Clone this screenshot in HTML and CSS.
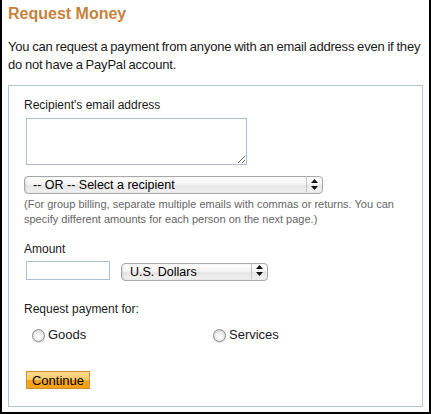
FILE: index.html
```html
<!DOCTYPE html>
<html lang="en">
<head>
  <meta charset="UTF-8" />
  <title>Request Money</title>
  <link rel="stylesheet" href="styles.css">
</head>
<body>

  <h1 class="title">Request Money</h1>
  <p class="intro">You can request a payment from anyone with an email address even if they do not have a PayPal account.</p>

  <!-- Request form box -->
  <form class="box">
    <label class="label" for="email">Recipient's email address</label>
    <textarea id="email" class="emails"></textarea>

    <div class="select recipient">
      <select>
        <option>-- OR -- Select a recipient</option>
      </select>
      <span class="arrows">
        <svg width="7" height="11" viewBox="0 0 7 11"><path d="M3.5 0 L7 4 L0 4 Z M0 7 L7 7 L3.5 11 Z" fill="#111"/></svg>
      </span>
    </div>

    <p class="help">(For group billing, separate multiple emails with commas or returns. You can specify different amounts for each person on the next page.)</p>

    <label class="label amount-label" for="amount">Amount</label>
    <div class="amount-row">
      <input type="text" id="amount" class="amount" />
      <div class="select currency">
        <select>
          <option>U.S. Dollars</option>
        </select>
        <span class="arrows">
          <svg width="7" height="11" viewBox="0 0 7 11"><path d="M3.5 0 L7 4 L0 4 Z M0 7 L7 7 L3.5 11 Z" fill="#111"/></svg>
        </span>
      </div>
    </div>

    <div class="label pay-label">Request payment for:</div>
    <div class="radios">
      <label class="choice"><input type="radio" name="type" /> Goods</label>
      <label class="choice"><input type="radio" name="type" /> Services</label>
    </div>

    <button type="submit" class="continue">Continue</button>
  </form>

</body>
</html>
```

FILE: styles.css
```css
/* Basic Reset */
* {
  box-sizing: border-box;
}

body {
  font-family: "Liberation Sans", Arial, sans-serif;
  margin: 0;
  height: 414px;
  background: #fff;
  color: #1a1a1a;
  border: 2px solid #000;
  border-top: none;
  padding: 0 6px;
}

.title {
  font-size: 16px;
  line-height: 20px;
  font-weight: bold;
  color: #c8813b;
  margin: 0;
  padding-top: 4px;
}

.intro {
  font-size: 13px;
  line-height: 18px;
  letter-spacing: -0.2px;
  word-spacing: -0.5px;
  margin: 14px 0 11px;
}

/* Form box */
.box {
  border: 1px solid #b3c5dc;
  background: #fff;
  padding: 12px 15px 16px;
  height: 322px;
}

.label {
  display: block;
  font-size: 12px;
  line-height: 15px;
}

.emails {
  display: block;
  width: 221px;
  height: 47px;
  margin: 5px 0 0 2px;
  border: 1px solid #a9bfd9;
  font-family: inherit;
}

/* Aqua style selects */
.select {
  position: relative;
  height: 18px;
}

.select select {
  appearance: none;
  -webkit-appearance: none;
  width: 100%;
  height: 18px;
  margin: 0;
  padding: 0 20px 0 8px;
  font-family: inherit;
  font-size: 12.5px;
  color: #000;
  border: 1px solid #a8a8a8;
  border-radius: 4px;
  background: linear-gradient(to bottom, #ffffff 0%, #f4f4f4 45%, #e6e6e6 55%, #f2f2f2 100%);
  box-shadow: inset 1px 0 2px rgba(0, 0, 0, 0.12);
  outline: none;
}

.select .arrows {
  position: absolute;
  right: 1px;
  top: 1px;
  bottom: 1px;
  width: 16px;
  border-left: 1px solid #c4c4c4;
  display: flex;
  align-items: center;
  justify-content: center;
  pointer-events: none;
}

.recipient {
  width: 299px;
  margin-top: 10px;
}

.help {
  font-size: 11px;
  line-height: 15px;
  color: #666;
  margin: 4px 0 0;
}

.amount-label {
  margin-top: 15px;
}

.amount-row {
  display: flex;
  align-items: center;
  gap: 11px;
  margin: 4px 0 0 2px;
}

.amount {
  width: 84px;
  height: 19px;
  margin: 0;
  border: 1px solid #a9bfd9;
}

.currency {
  width: 147px;
}

.pay-label {
  margin-top: 22px;
}

.radios {
  display: flex;
  margin: 10px 0 0 8px;
  height: 16px;
}

.choice {
  width: 181px;
  display: flex;
  align-items: center;
  gap: 3px;
  font-size: 13px;
  line-height: 16px;
}

.choice input {
  appearance: none;
  -webkit-appearance: none;
  width: 13px;
  height: 13px;
  margin: 0;
  border: 1px solid #8a8a8a;
  border-radius: 50%;
  background: radial-gradient(circle at 50% 65%, #ffffff 0%, #eeeeee 45%, #c9c9c9 100%);
  box-shadow: 0 1px 1px rgba(0, 0, 0, 0.15);
}

.continue {
  display: block;
  margin: 28px 0 0 2px;
  width: 64px;
  height: 18px;
  padding: 0;
  font-family: inherit;
  font-size: 13px;
  color: #000;
  border: 1px solid #c99036;
  background: linear-gradient(to bottom, #ffd88c 0%, #ffcb6a 50%, #f9a41f 51%, #f7a11a 100%);
  cursor: pointer;
}
```
